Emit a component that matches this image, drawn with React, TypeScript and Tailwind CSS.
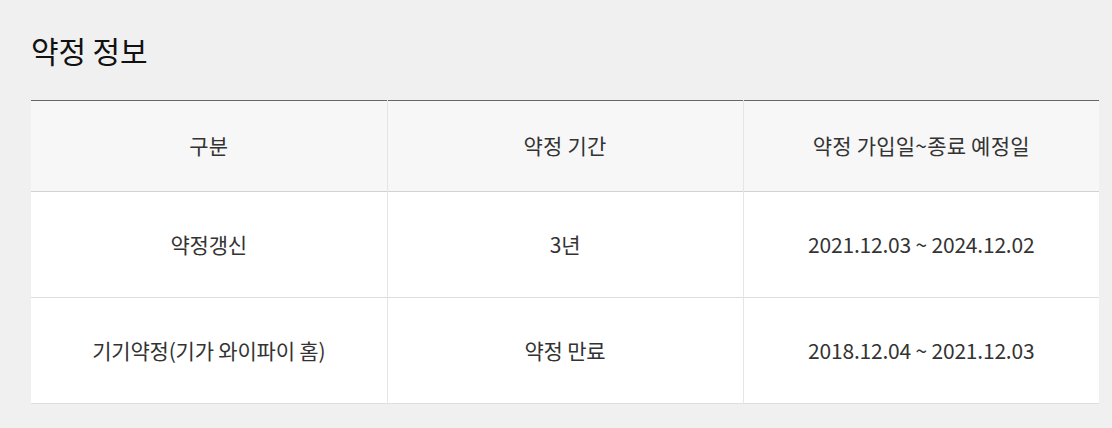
const rows = [
  { type: '약정갱신', period: '3년', range: '2021.12.03 ~ 2024.12.02' },
  { type: '기기약정(기가 와이파이 홈)', period: '약정 만료', range: '2018.12.04 ~ 2021.12.03' },
];

const App = () => {
  return (
    <div
      className="min-h-[428px] bg-[#f0f0f0] pl-[31px] pr-[13px] pt-[29px]"
      style={{ fontFamily: '"Noto Sans CJK KR", "Noto Sans", sans-serif' }}
    >
      <h2 className="text-[30px] leading-[42px] text-[#111] font-normal tracking-[-0.1px]">약정 정보</h2>

      <table className="mt-[29px] w-full table-fixed border-collapse border-t border-t-[#666] text-[21px] text-[#333]">
        <thead>
          <tr className="h-[91px] bg-[#f7f7f7] border-b border-b-[#d2d2d2] tracking-[0.2px]">
            <th className="font-normal border-r border-r-[#e5e5e5]">구분</th>
            <th className="font-normal border-r border-r-[#e5e5e5]">약정 기간</th>
            <th className="font-normal">약정 가입일~종료 예정일</th>
          </tr>
        </thead>
        <tbody>
          {rows.map((row) => (
            <tr key={row.type} className="h-[106px] bg-white border-b border-b-[#dedede] tracking-[-0.2px]">
              <td className="text-center border-r border-r-[#e5e5e5]">{row.type}</td>
              <td className="text-center border-r border-r-[#e5e5e5]">{row.period}</td>
              <td className="text-center">{row.range}</td>
            </tr>
          ))}
        </tbody>
      </table>
    </div>
  );
};

export default App;
